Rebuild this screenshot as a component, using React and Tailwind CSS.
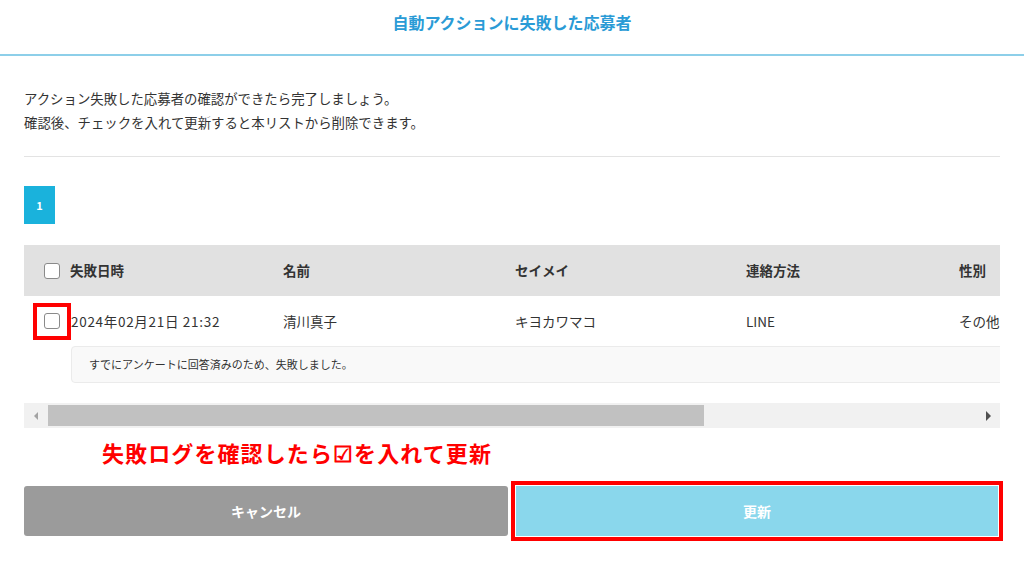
export default function App() {
    const font = { fontFamily: '"Noto Sans CJK JP", "Noto Sans", sans-serif' }

    return (
        <div className="w-[1024px] h-[563px] overflow-hidden bg-white text-[#333]" style={font}>
            <div className="h-[56px] flex justify-center pt-[10px] border-b-2 border-[#8dcfe9]">
                <div className="text-[16px] leading-[24px] font-bold text-[#2a9bd6]">自動アクションに失敗した応募者</div>
            </div>

            <div className="px-[24px]">
                <div className="mt-[30px] text-[13.4px] leading-[24px]">
                    <div>アクション失敗した応募者の確認ができたら完了しましょう。</div>
                    <div>確認後、チェックを入れて更新すると本リストから削除できます。</div>
                </div>

                <div className="mt-[22px] h-px bg-[#e3e3e3]" />

                <div className="mt-[29px] flex">
                    <div className="w-[31px] h-[38px] flex items-center justify-center bg-[#1ab2dc] text-white text-[11px] font-bold">1</div>
                </div>

                <div className="mt-[21px] overflow-hidden">
                    <div className="w-[1400px]">
                        <div className="flex items-center h-[51px] bg-[#e1e1e1] text-[13.5px] font-bold">
                            <div className="w-[259px] flex items-center pl-[20px] gap-[10px]">
                                <span className="w-[16px] h-[16px] rounded-[3px] border border-[#8a8a8a] bg-white" />
                                <span>失敗日時</span>
                            </div>
                            <div className="w-[232px]">名前</div>
                            <div className="w-[231px]">セイメイ</div>
                            <div className="w-[213px]">連絡方法</div>
                            <div className="w-[200px]">性別</div>
                        </div>
                        <div className="flex items-center h-[50px] text-[13.5px]">
                            <div className="w-[259px] flex items-center pl-[9px]">
                                <span className="w-[38px] h-[37px] flex items-center justify-center border-4 border-[#f00]">
                                    <span className="w-[16px] h-[16px] rounded-[3px] border border-[#8a8a8a] bg-white" />
                                </span>
                                <span className="tracking-[0.7px]">2024年02月21日 21:32</span>
                            </div>
                            <div className="w-[232px]">清川真子</div>
                            <div className="w-[231px]">キヨカワマコ</div>
                            <div className="w-[213px]">LINE</div>
                            <div className="w-[200px]">その他</div>
                        </div>
                        <div className="ml-[47px] h-[37px] flex items-center pl-[17px] bg-[#f9f9f9] border border-[#ebebeb] rounded-l-[4px] text-[11px]">
                            すでにアンケートに回答済みのため、失敗しました。
                        </div>
                    </div>
                </div>

                <div className="mt-[20px] h-[25px] bg-[#f1f1f1] flex items-center">
                    <div className="w-[24px] flex justify-center">
                        <span className="w-0 h-0 border-y-[4px] border-y-transparent border-r-[4px] border-r-[#a3a3a3]" />
                    </div>
                    <div className="w-[656px] h-[21px] bg-[#c1c1c1]" />
                    <div className="flex-1" />
                    <div className="w-[24px] flex justify-center">
                        <span className="w-0 h-0 border-y-[5px] border-y-transparent border-l-[5px] border-l-[#505050]" />
                    </div>
                </div>

                <div className="mt-[12px] pl-[78px] text-[22px] leading-[24px] font-bold text-[#f00] tracking-[1.1px]">
                    失敗ログを確認したら☑を入れて更新
                </div>

                <div className="mt-[22px] flex gap-[8px]">
                    <button className="w-[484px] h-[50px] rounded-[3px] bg-[#9b9b9b] text-white text-[14px] font-bold">キャンセル</button>
                    <button className="w-[482px] h-[50px] bg-[#8ad7ec] text-white text-[14px] font-bold outline-4 outline-[#f00] outline-offset-[1px]">更新</button>
                </div>
            </div>
        </div>
    )
}
